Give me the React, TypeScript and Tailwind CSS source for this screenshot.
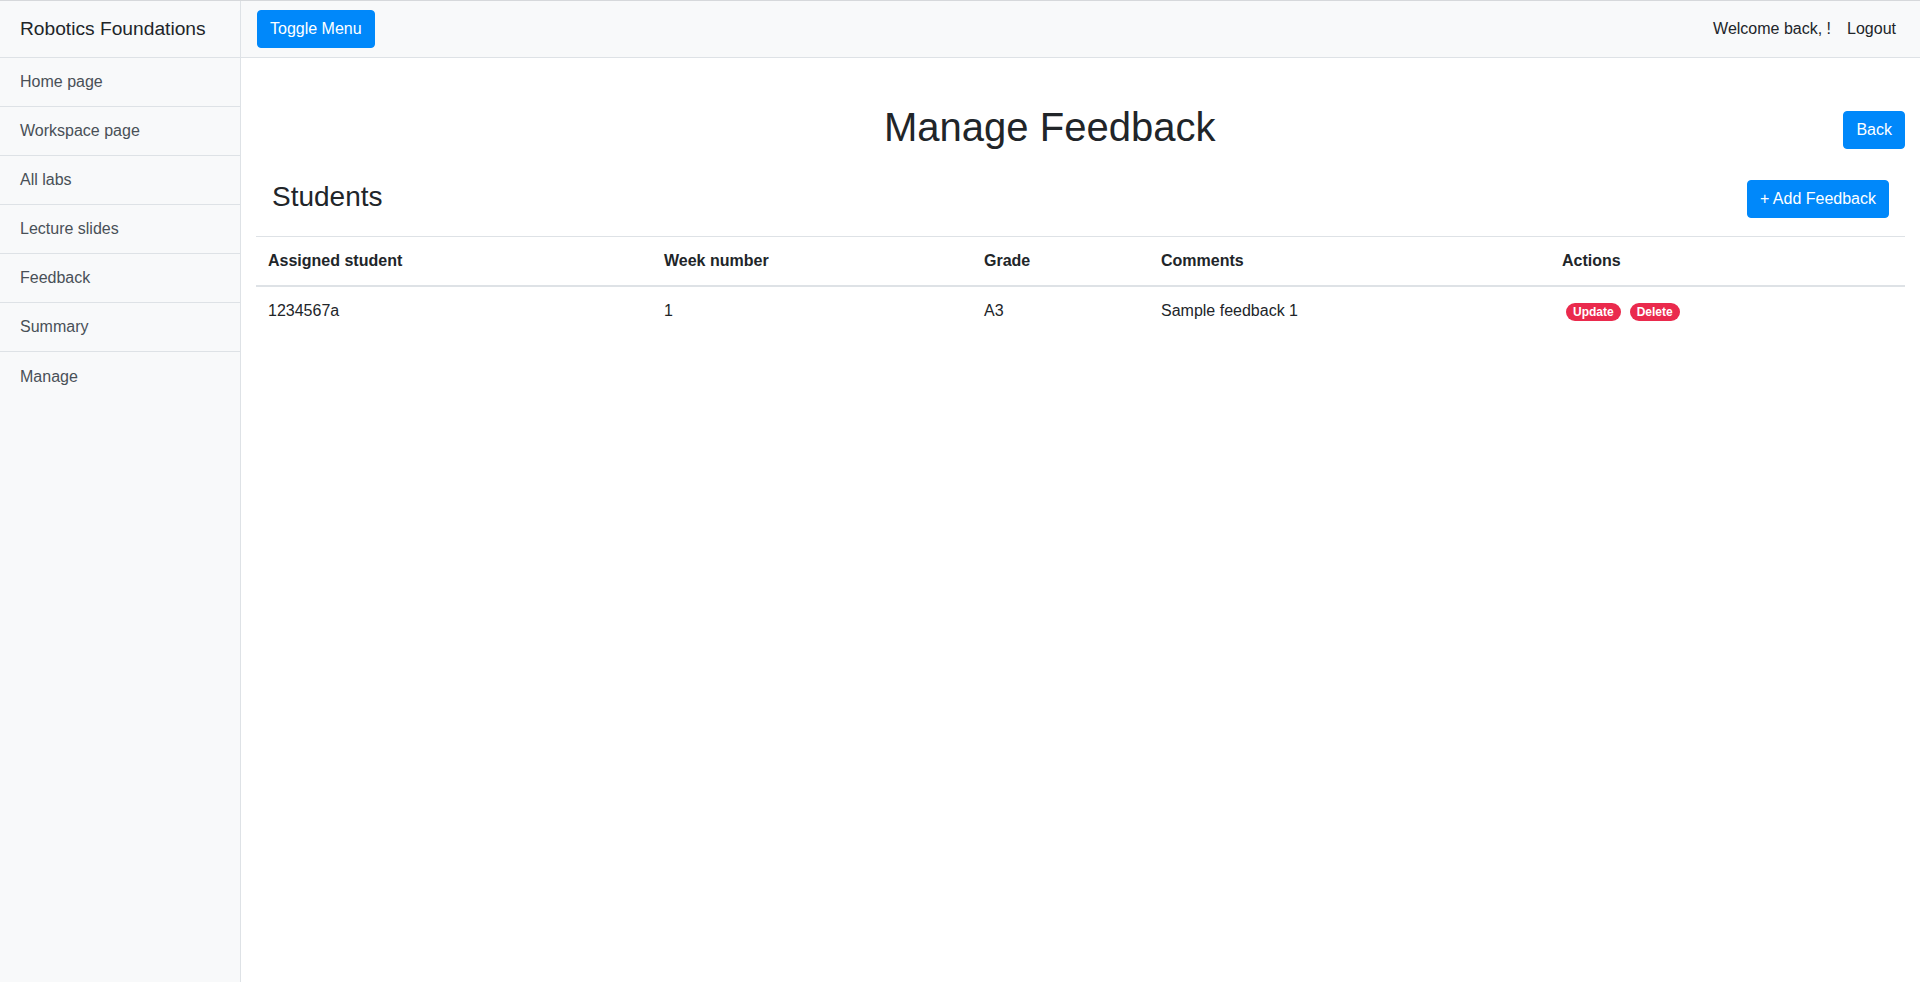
import React from "react";

const navItems = [
  "Home page",
  "Workspace page",
  "All labs",
  "Lecture slides",
  "Feedback",
  "Summary",
  "Manage",
];

const rows = [
  { student: "1234567a", week: "1", grade: "A3", comment: "Sample feedback 1" },
];

export default function App() {
  return (
    <div
      className="flex min-h-screen h-[982px] border-t border-[#d6d8db] bg-white text-[#212529]"
      style={{ fontFamily: '"Liberation Sans", Arial, sans-serif' }}
    >
      {/* Sidebar */}
      <div className="w-[241px] shrink-0 border-r border-[#dee2e6] bg-[#f8f9fa]">
        <div className="h-[57px] border-b border-[#dee2e6] px-5 flex items-center text-[19.2px] text-[#212529]">
          Robotics Foundations
        </div>
        <div className="flex flex-col">
          {navItems.map((item, i) => (
            <a
              key={item}
              href="#"
              className={
                "h-[49px] px-5 flex items-center text-[16px] text-[#495057] " +
                (i < navItems.length - 1 ? "border-b border-[#dee2e6]" : "")
              }
            >
              {item}
            </a>
          ))}
        </div>
      </div>

      {/* Page content */}
      <div className="flex-1 flex flex-col">
        <nav className="h-[57px] border-b border-[#dee2e6] bg-[#f8f9fa] px-4 flex items-center justify-between">
          <button className="h-[38px] px-3 border border-[#0088fa] rounded-[4px] bg-[#0088fa] text-white text-[16px]">
            Toggle Menu
          </button>
          <div className="flex items-center text-[16px] text-[#212529]">
            <span className="px-2">Welcome back, !</span>
            <a href="#" className="px-2">
              Logout
            </a>
          </div>
        </nav>

        <div className="px-[15px]">
          <div className="flex items-center mt-[45px]">
            <h1 className="flex-1 text-center text-[40px] leading-[48px] text-[#212529]">
              Manage Feedback
            </h1>
            <button className="h-[38px] px-3 mt-[5px] border border-[#0088fa] rounded-[4px] bg-[#0088fa] text-white text-[16px]">
              Back
            </button>
          </div>

          <div className="flex items-start justify-between px-4 mt-[29px] mb-[18px]">
            <h3 className="text-[28px] leading-[33.6px] text-[#212529]">Students</h3>
            <button className="h-[38px] px-3 border border-[#0088fa] rounded-[4px] bg-[#0088fa] text-white text-[16px]">
              + Add Feedback
            </button>
          </div>

          <table className="w-full table-fixed border-collapse text-[16px] text-[#212529]">
            <colgroup>
              <col className="w-[396px]" />
              <col className="w-[320px]" />
              <col className="w-[177px]" />
              <col className="w-[401px]" />
              <col />
            </colgroup>
            <thead>
              <tr className="border-t border-[#dee2e6]">
                {["Assigned student", "Week number", "Grade", "Comments", "Actions"].map((h) => (
                  <th key={h} className="p-3 text-left font-bold leading-6 border-b-2 border-[#dee2e6]">
                    {h}
                  </th>
                ))}
              </tr>
            </thead>
            <tbody>
              {rows.map((r) => (
                <tr key={r.student}>
                  <td className="p-3 leading-6">{r.student}</td>
                  <td className="p-3 leading-6">{r.week}</td>
                  <td className="p-3 leading-6">{r.grade}</td>
                  <td className="p-3 leading-6">{r.comment}</td>
                  <td className="p-3 leading-6">
                    <span className="inline-flex items-center">
                      <span className="ml-1 inline-block rounded-full bg-[#ea2a4d] px-[7px] py-[3px] text-[12px] leading-[12px] font-bold text-white">
                        Update
                      </span>
                      <span className="ml-[9px] inline-block rounded-full bg-[#ea2a4d] px-[7px] py-[3px] text-[12px] leading-[12px] font-bold text-white">
                        Delete
                      </span>
                    </span>
                  </td>
                </tr>
              ))}
            </tbody>
          </table>
        </div>
      </div>
    </div>
  );
}
